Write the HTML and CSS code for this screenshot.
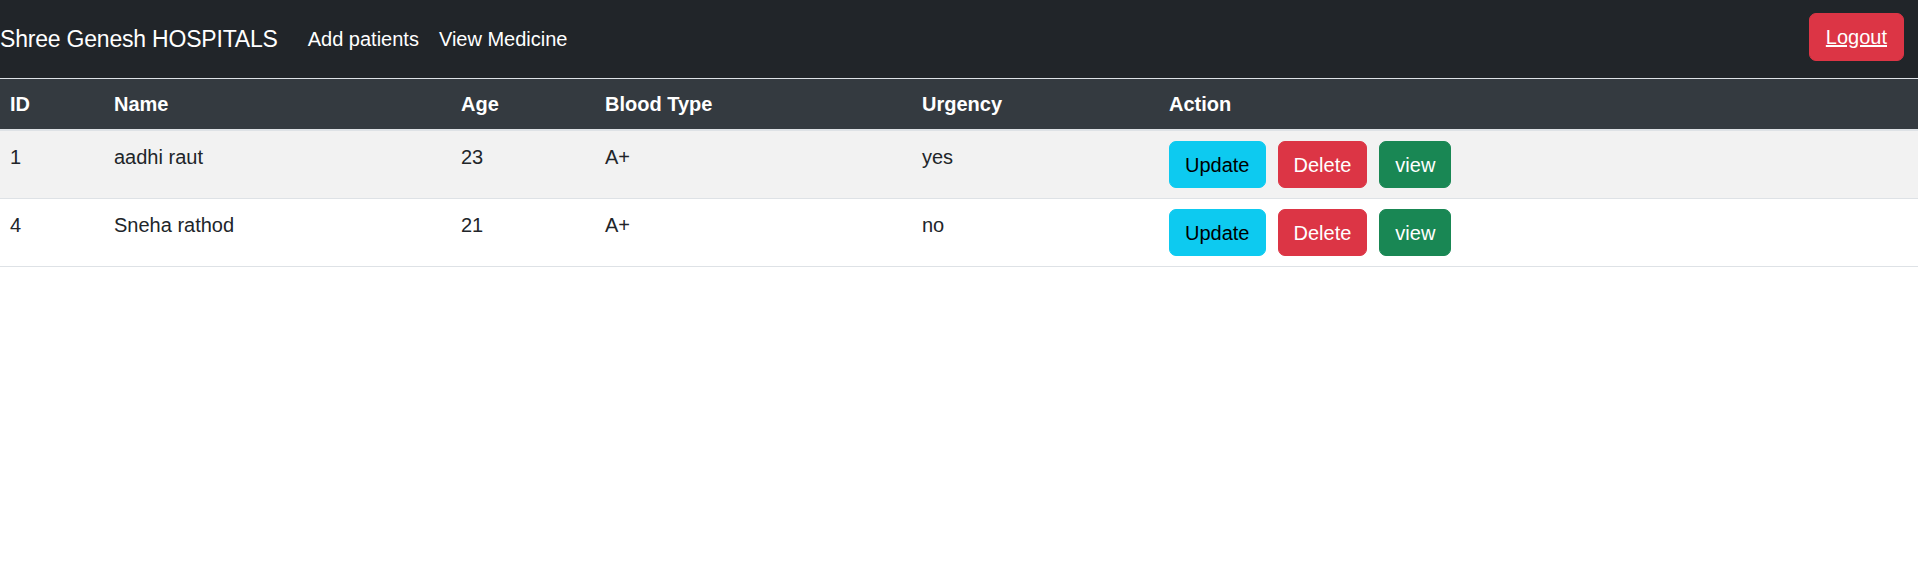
FILE: index.html
```html
<!DOCTYPE html>
<html lang="en">
<head>
<meta charset="utf-8">
<title>Shree Genesh HOSPITALS</title>
<link rel="stylesheet" href="styles.css">
</head>
<body>
<nav class="navbar">
  <a class="brand" href="#">Shree Genesh HOSPITALS</a>
  <ul class="nav-links">
    <li><a class="nav-link" href="#">Add patients</a></li>
    <li><a class="nav-link" href="#">View Medicine</a></li>
  </ul>
  <a class="btn btn-danger logout" href="#">Logout</a>
</nav>
<table class="table">
  <thead>
    <tr>
      <th class="c-id">ID</th>
      <th class="c-name">Name</th>
      <th class="c-age">Age</th>
      <th class="c-blood">Blood Type</th>
      <th class="c-urg">Urgency</th>
      <th class="c-act">Action</th>
    </tr>
  </thead>
  <tbody>
    <tr class="striped">
      <td>1</td>
      <td>aadhi raut</td>
      <td>23</td>
      <td>A+</td>
      <td>yes</td>
      <td class="act-cell">
        <div class="actions">
          <button class="btn btn-info">Update</button>
          <button class="btn btn-danger">Delete</button>
          <button class="btn btn-success">view</button>
        </div>
      </td>
    </tr>
    <tr>
      <td>4</td>
      <td>Sneha rathod</td>
      <td>21</td>
      <td>A+</td>
      <td>no</td>
      <td class="act-cell">
        <div class="actions">
          <button class="btn btn-info">Update</button>
          <button class="btn btn-danger">Delete</button>
          <button class="btn btn-success">view</button>
        </div>
      </td>
    </tr>
  </tbody>
</table>
</body>
</html>
```

FILE: styles.css
```css
* { box-sizing: border-box; }

html, body {
  margin: 0;
  padding: 0;
  background: #ffffff;
  font-family: "Liberation Sans", Arial, sans-serif;
  font-size: 20px;
  line-height: 30px;
  color: #212529;
}

.navbar {
  display: flex;
  align-items: center;
  height: 79px;
  padding: 0 14px 1px 0;
  background: #212529;
  border-bottom: 1px solid #dee2e6;
}

.brand {
  font-size: 23px;
  letter-spacing: -0.2px;
  color: #ffffff;
  text-decoration: none;
  margin-right: 20px;
  margin-top: 1px;
}

.nav-links {
  display: flex;
  list-style: none;
  margin: 0;
  padding: 0;
  flex: 1;
}

.nav-link {
  display: block;
  padding: 5px 10px;
  color: #ffffff;
  text-decoration: none;
}

.btn {
  display: inline-block;
  font-family: inherit;
  font-size: 20px;
  line-height: 30px;
  padding: 7.5px 15px;
  border: 1px solid transparent;
  border-radius: 7px;
  cursor: pointer;
}

.btn-info {
  background: #0dcaf0;
  border-color: #0dcaf0;
  color: #000000;
}

.btn-danger {
  background: #dc3545;
  border-color: #dc3545;
  color: #ffffff;
}

.btn-success {
  background: #198754;
  border-color: #198754;
  color: #ffffff;
}

.logout {
  text-decoration: underline;
  padding: 8px 16px;
  margin-top: -3px;
}

.table {
  width: 100%;
  border-collapse: collapse;
}

.table th,
.table td {
  padding: 11px 10px 9px;
  text-align: left;
  vertical-align: top;
  border-bottom: 1px solid #dee2e6;
}

.table td.act-cell {
  padding: 10px;
}

.table thead th {
  background: #343a40;
  color: #ffffff;
  font-weight: bold;
  padding: 10px;
  border-bottom: 2px solid #dee2e6;
}

.c-id { width: 104px; }
.c-name { width: 347px; }
.c-age { width: 144px; }
.c-blood { width: 317px; }
.c-urg { width: 247px; }

.striped td { background: #f2f2f2; }

.actions {
  display: flex;
  gap: 12px;
}
```
